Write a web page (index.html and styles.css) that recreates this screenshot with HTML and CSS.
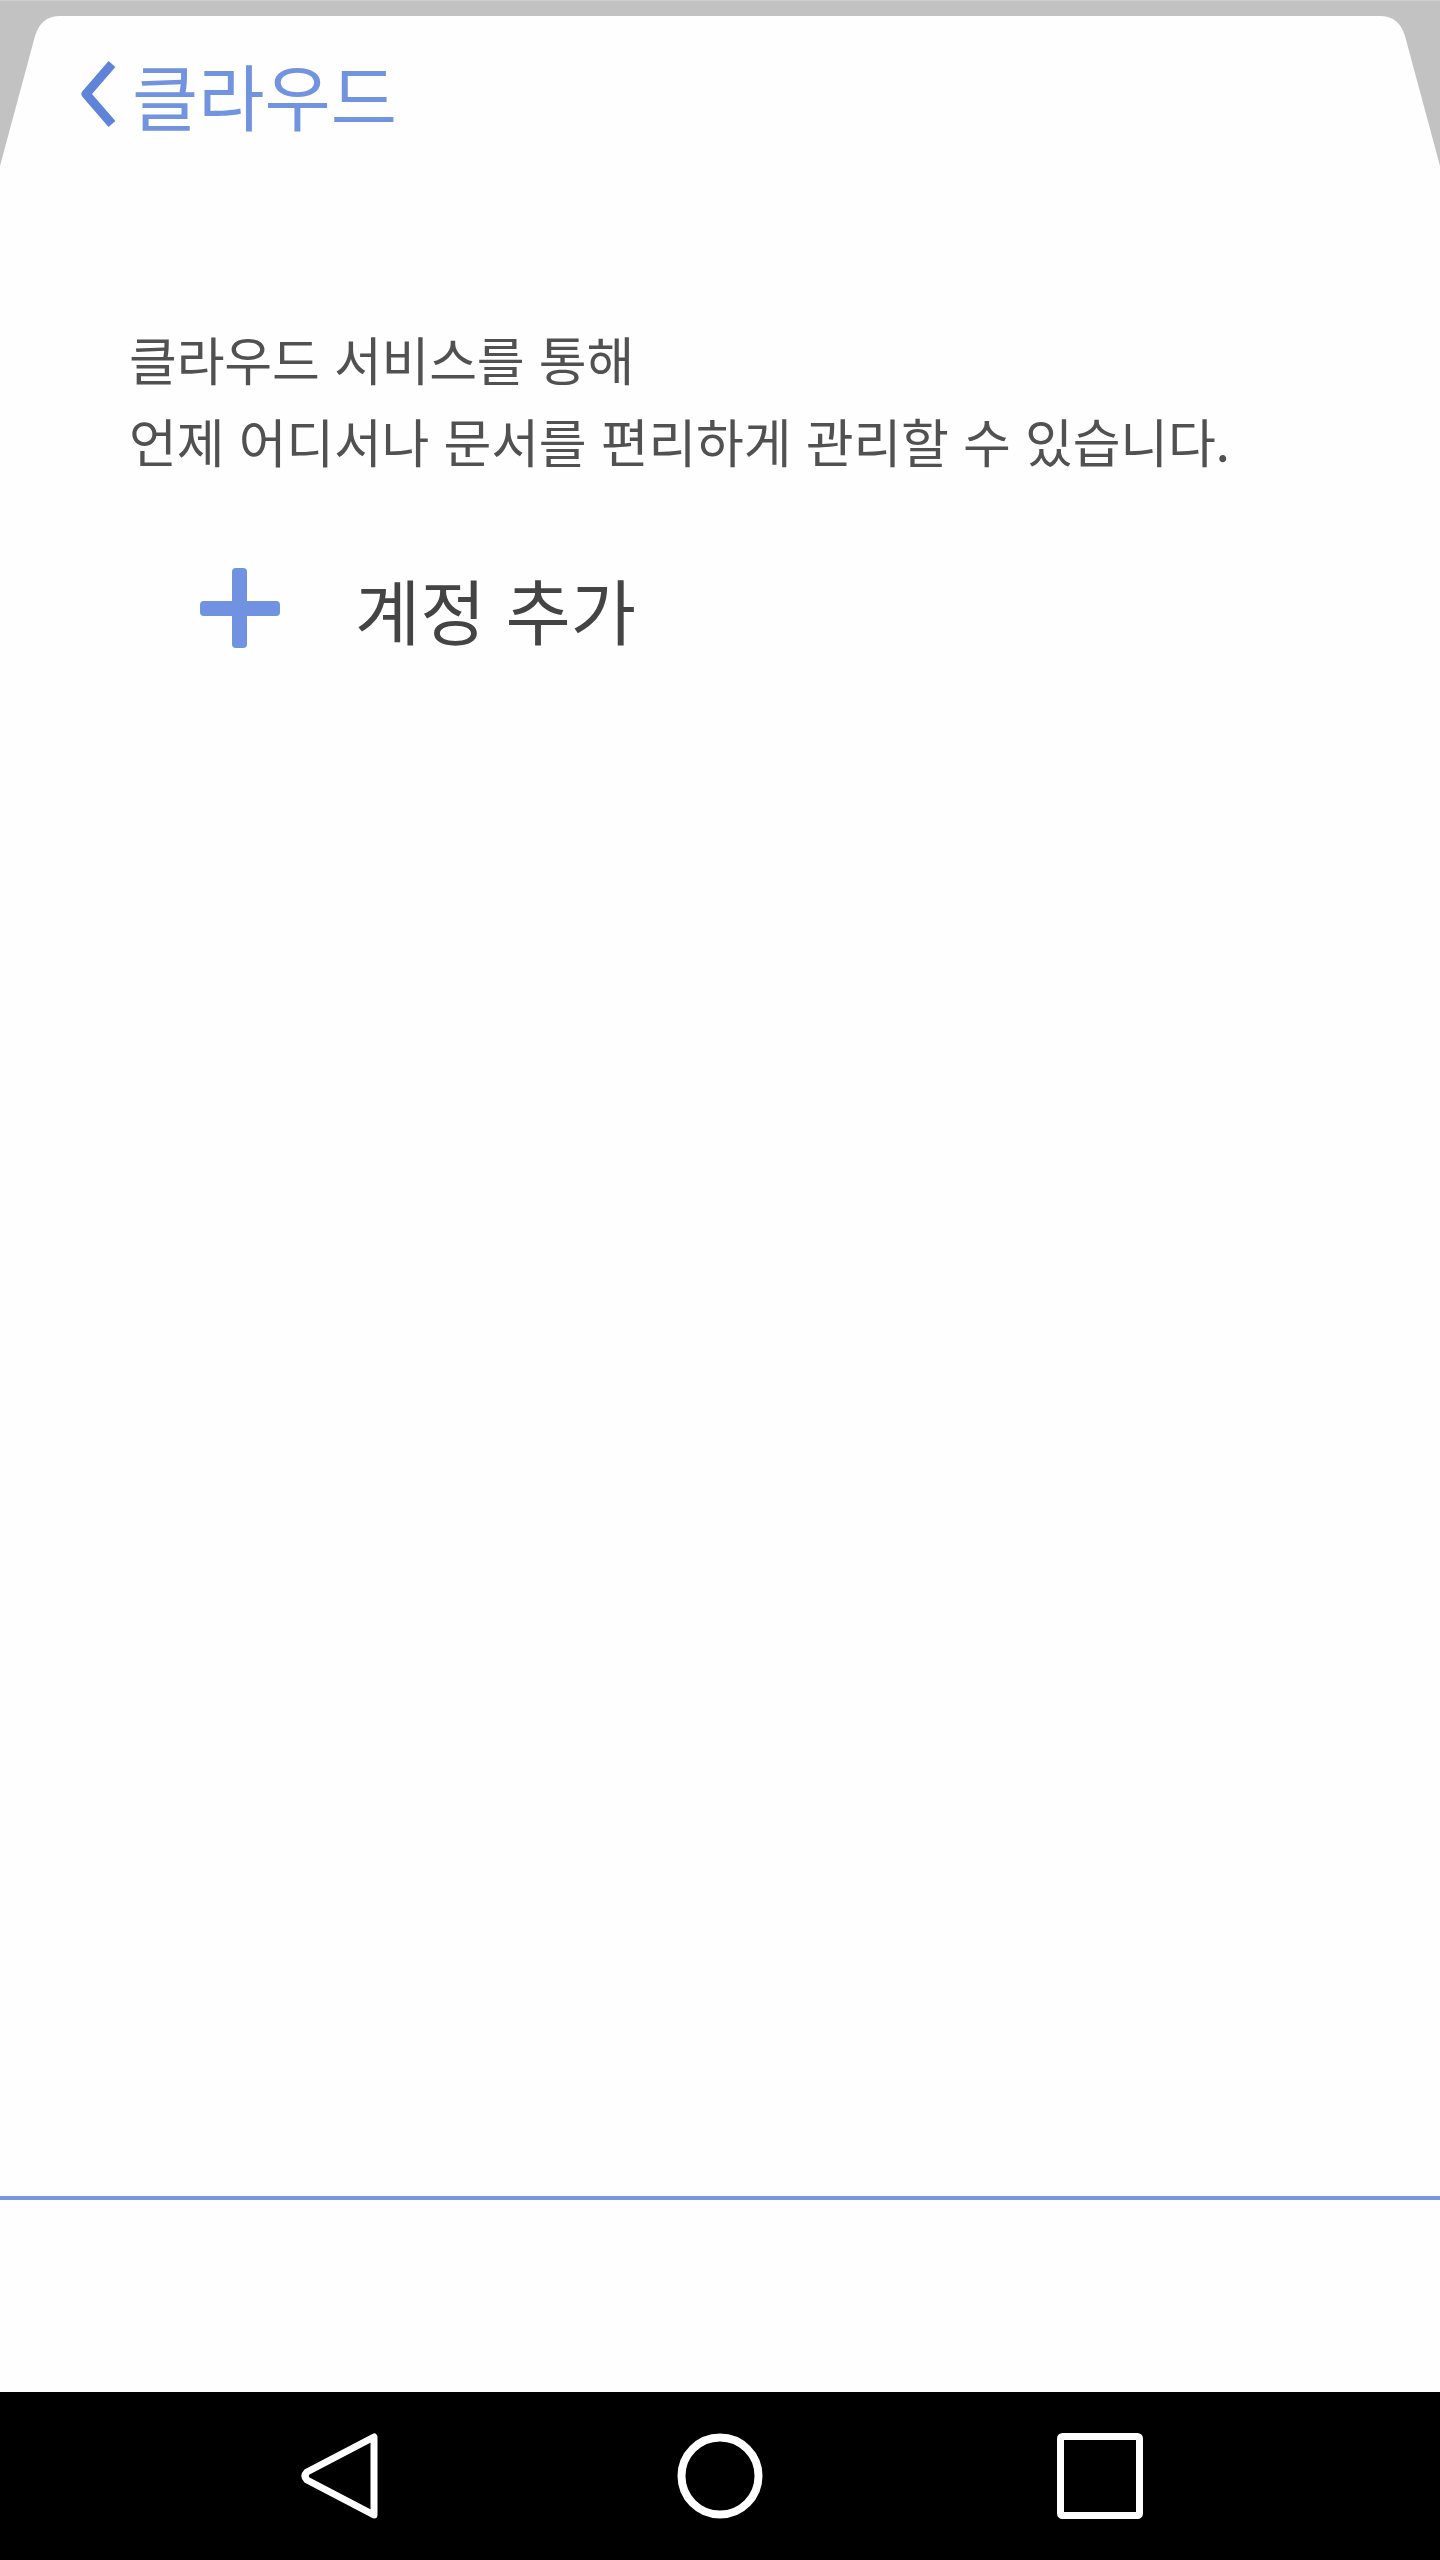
FILE: index.html
```html
<!DOCTYPE html>
<html lang="ko">
<head>
    <meta charset="UTF-8">
    <meta name="viewport" content="width=device-width, initial-scale=1.0">
    <title>클라우드</title>
    <link rel="stylesheet" href="styles.css">
</head>
<body>
    <div id="screen">
        <div id="tabbar">
            <!-- tab shape behind the title -->
            <svg class="tab-shape" width="1440" height="170" viewBox="0 0 1440 170">
                <rect x="0" y="0" width="1440" height="1" fill="#cfcfcf"/>
                <path d="M0,166 L35,36 Q41,16 60,16 L1380,16 Q1399,16 1405,36 L1440,166 L1440,170 L0,170 Z" fill="#fefefe"/>
            </svg>
            <div class="title">
                <svg class="chevron" width="40" height="70" viewBox="0 0 40 70">
                    <polyline points="34,5 8,35 34,65" fill="none" stroke="#5e83d8" stroke-width="9" stroke-linejoin="round"/>
                </svg>
                <span class="title-text">클라우드</span>
            </div>
        </div>

        <div id="content">
            <p class="intro">클라우드 서비스를 통해<br>언제 어디서나 문서를 편리하게 관리할 수 있습니다.</p>

            <div class="add-row">
                <svg class="plus" width="80" height="80" viewBox="0 0 80 80">
                    <rect x="32" y="0" width="15" height="80" rx="4" fill="#7092e0"/>
                    <rect x="0" y="33" width="80" height="15" rx="4" fill="#7092e0"/>
                </svg>
                <span class="add-text">계정 추가</span>
            </div>
        </div>

        <div id="footer"></div>

        <div id="navbar">
            <div class="nav-btn">
                <svg width="100" height="100" viewBox="0 0 100 100">
                    <path d="M84,11 L84,89 L17,54 Q13,50 17,46 Z" fill="none" stroke="#fff" stroke-width="7" stroke-linejoin="round"/>
                </svg>
            </div>
            <div class="nav-btn">
                <svg width="100" height="100" viewBox="0 0 100 100">
                    <circle cx="50" cy="50" r="38.5" fill="none" stroke="#fff" stroke-width="8"/>
                </svg>
            </div>
            <div class="nav-btn">
                <svg width="100" height="100" viewBox="0 0 100 100">
                    <rect x="10.5" y="10.5" width="79" height="79" rx="2" fill="none" stroke="#fff" stroke-width="7"/>
                </svg>
            </div>
        </div>
    </div>
</body>
</html>
```

FILE: styles.css
```css
html, body {
    margin: 0;
    padding: 0;
    background: #fefefe;
}
#screen {
    width: 1440px;
    height: 2560px;
    display: flex;
    flex-direction: column;
    font-family: "Noto Sans CJK KR", "Noto Sans", sans-serif;
}
#tabbar {
    position: relative;
    height: 170px;
    background-color: #c2c2c2;
    flex-shrink: 0;
}
.tab-shape {
    position: absolute;
    top: 0;
    left: 0;
    display: block;
}
.title {
    position: relative;
    display: flex;
    align-items: center;
    padding: 58px 0 0 78px;
    height: 72px;
}
.chevron {
    display: block;
    margin-right: 14px;
}
.title-text {
    font-size: 72px;
    line-height: 72px;
    color: #7293e0;
}
#content {
    flex: 1;
    border-bottom: 4px solid #7b96e0;
}
.intro {
    margin: 148px 0 0 129px;
    font-size: 52px;
    line-height: 82px;
    color: #515151;
    letter-spacing: -0.2px;
}
.add-row {
    display: flex;
    align-items: center;
    margin-top: 86px;
    padding-left: 200px;
}
.plus {
    display: block;
    margin-right: 75px;
}
.add-text {
    font-size: 71px;
    line-height: 80px;
    color: #444;
}
#footer {
    height: 192px;
    flex-shrink: 0;
}
#navbar {
    height: 168px;
    flex-shrink: 0;
    background: #000;
    display: flex;
    justify-content: center;
    align-items: center;
    gap: 280px;
}
.nav-btn {
    width: 100px;
    height: 100px;
}
.nav-btn svg {
    display: block;
}
```
